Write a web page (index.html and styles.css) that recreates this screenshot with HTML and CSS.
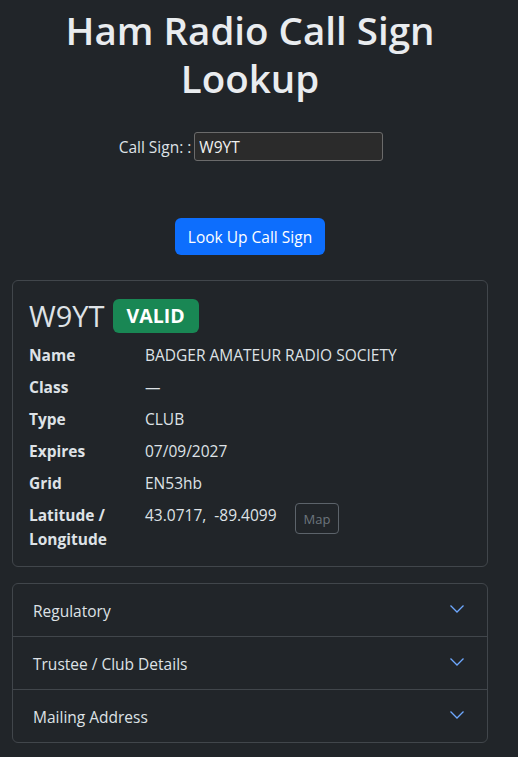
FILE: index.html
```html
<!DOCTYPE html>
<html lang="en">
<head>
<meta charset="utf-8">
<title>Ham Radio Call Sign Lookup</title>
<link rel="stylesheet" href="styles.css">
</head>
<body>
<main class="page">
  <h1 class="title">Ham Radio Call Sign Lookup</h1>
  <form class="lookup">
    <div class="field">
      <label for="cs">Call Sign: :</label>
      <input id="cs" class="input" type="text" value="W9YT">
    </div>
    <button type="button" class="btn-primary">Look Up Call Sign</button>
  </form>

  <section class="card">
    <div class="card-head">
      <span class="callsign">W9YT</span>
      <span class="badge">VALID</span>
    </div>
    <dl class="details">
      <dt>Name</dt><dd>BADGER AMATEUR RADIO SOCIETY</dd>
      <dt>Class</dt><dd>—</dd>
      <dt>Type</dt><dd>CLUB</dd>
      <dt>Expires</dt><dd>07/09/2027</dd>
      <dt>Grid</dt><dd>EN53hb</dd>
      <dt>Latitude /<br>Longitude</dt>
      <dd class="coords"><span>43.0717,&nbsp; -89.4099</span><button type="button" class="btn-map">Map</button></dd>
    </dl>
  </section>

  <section class="accordion">
    <div class="acc-item">
      <span>Regulatory</span>
      <svg class="chev" viewBox="0 0 16 16" width="16" height="16"><path d="M1.5 4.5 8 11l6.5-6.5" fill="none" stroke="currentColor" stroke-width="1.3"/></svg>
    </div>
    <div class="acc-item">
      <span>Trustee / Club Details</span>
      <svg class="chev" viewBox="0 0 16 16" width="16" height="16"><path d="M1.5 4.5 8 11l6.5-6.5" fill="none" stroke="currentColor" stroke-width="1.3"/></svg>
    </div>
    <div class="acc-item">
      <span>Mailing Address</span>
      <svg class="chev" viewBox="0 0 16 16" width="16" height="16"><path d="M1.5 4.5 8 11l6.5-6.5" fill="none" stroke="currentColor" stroke-width="1.3"/></svg>
    </div>
  </section>
</main>
</body>
</html>
```

FILE: styles.css
```css
* { box-sizing: border-box; }
html, body {
  margin: 0;
  background: #212529;
  color: #dee2e6;
  font-family: "Open Sans", "Noto Sans", sans-serif;
  font-size: 15.5px;
  line-height: 24px;
}
.page {
  width: 500px;
  padding: 0 12px 16px;
}
.title {
  margin: 6px 0 0;
  text-align: center;
  font-size: 38.5px;
  line-height: 48px;
  font-weight: 600;
  color: #e9ecef;
}
.lookup {
  display: flex;
  flex-direction: column;
  align-items: center;
}
.field {
  margin-top: 30px;
  display: flex;
  align-items: center;
  gap: 3px;
  margin-left: 2px;
}
.input {
  width: 189px;
  height: 29px;
  background: #2b2b2b;
  border: 1px solid #6b6b6b;
  border-radius: 3px;
  color: #f1f1f1;
  font: inherit;
  padding: 0 4px;
}
.btn-primary {
  margin-top: 57px;
  background: #0d6efd;
  color: #fff;
  border: none;
  border-radius: 6px;
  height: 37px;
  padding: 0 13px;
  font: inherit;
}
.card {
  margin-top: 25px;
  border: 1px solid #41464b;
  border-radius: 6px;
  padding: 17px 16px 15px;
}
.card-head {
  display: flex;
  align-items: center;
  gap: 8px;
  height: 36px;
  margin-bottom: 9px;
}
.callsign {
  font-size: 29px;
  line-height: 36px;
  color: #dee2e6;
}
.badge {
  background: #198754;
  color: #fff;
  font-weight: 700;
  font-size: 19.5px;
  line-height: 34px;
  height: 34px;
  padding: 0 14px;
  border-radius: 6px;
}
.details {
  margin: 0;
  display: grid;
  grid-template-columns: 116px 1fr;
  row-gap: 8px;
}
.details dt {
  font-weight: 700;
}
.details dd {
  margin: 0;
}
.coords {
  display: flex;
  align-items: flex-start;
  gap: 18px;
}
.btn-map {
  background: transparent;
  border: 1px solid #5c636a;
  color: #6c757d;
  border-radius: 4px;
  font: inherit;
  font-size: 13px;
  height: 31px;
  padding: 0 8px;
}
.accordion {
  margin-top: 16px;
  border: 1px solid #41464b;
  border-radius: 6px;
}
.acc-item {
  height: 53px;
  display: flex;
  align-items: center;
  justify-content: space-between;
  padding: 2px 22px 0 20px;
  border-top: 1px solid #41464b;
}
.acc-item:first-child {
  border-top: none;
  height: 52px;
}
.chev {
  color: #6ea8fe;
  margin-top: -4px;
}
```
